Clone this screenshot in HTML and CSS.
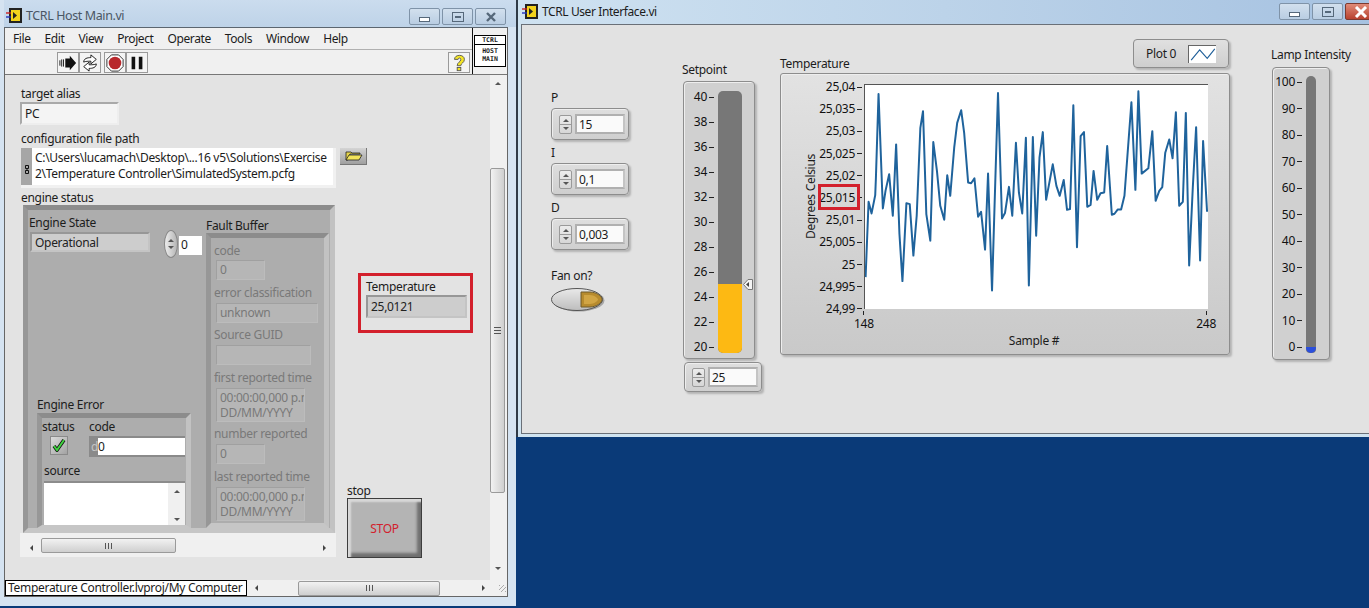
FILE: index.html
```html
<!DOCTYPE html>
<html lang="en">
<head>
  <meta charset="UTF-8" />
  <title>TCRL Host Main.vi</title>
  <link rel="stylesheet" href="styles.css">
</head>
<body>
  <div class="desktop">

    <!-- host window -->
    <div class="win win-host">
      <div class="titlebar">
        <svg class="vi-icon" viewBox="0 0 17 17"><rect x="3" y="1" width="13" height="15" fill="#222"/><rect x="5" y="3" width="9" height="11" fill="#f2d21c"/><path d="M7 5l4 3.5-4 3.5z" fill="#222"/><path d="M0 6h5" stroke="#c22" stroke-width="1.4"/><path d="M0 10h5" stroke="#23b" stroke-width="1.4"/></svg>
        <span class="title">TCRL Host Main.vi</span>
        <div class="win-btns">
          <span class="wb"><i class="g-min"></i></span>
          <span class="wb"><i class="g-max"></i></span>
          <span class="wb wb-x"><svg viewBox="0 0 12 10" width="12" height="10"><path d="M2 1l8 8M10 1l-8 8" stroke="#56687a" stroke-width="2.4"/></svg></span>
        </div>
      </div>

      <div class="vi-body">
        <div class="top-area">
          <div class="top-left">
            <div class="menubar">
              <span>File</span><span>Edit</span><span>View</span><span>Project</span><span>Operate</span><span>Tools</span><span>Window</span><span>Help</span>
            </div>
            <div class="toolbar">
              <div class="tool-group">
                <span class="tool"><svg viewBox="0 0 20 20"><path d="M1 7v6M3 6v8M5 6v8" stroke="#111"/><path d="M7 5h5V2l7 8-7 8v-3H7z" fill="#111"/></svg></span>
                <span class="tool"><svg viewBox="0 0 20 20"><path d="M3 9c0-4 4-5 8-5V1l6 5-6 5V8c-3 0-6 0-8 1z" fill="#fff" stroke="#111"/><path d="M17 11c0 4-4 5-8 5v3l-6-5 6-5v3c3 0 6 0 8-1z" fill="#fff" stroke="#111"/></svg></span>
              </div>
              <div class="tool-group">
                <span class="tool"><svg viewBox="0 0 20 20"><path d="M6 1h8l5 5v8l-5 5H6l-5-5V6z" fill="#fff" stroke="#222"/><circle cx="10" cy="10" r="7" fill="#b8282c"/></svg></span>
                <span class="tool"><svg viewBox="0 0 20 20"><path d="M4 3h4v14H4zM12 3h4v14h-4z" fill="#111"/></svg></span>
              </div>
              <span class="tool tool-help"><svg viewBox="0 0 20 20"><path d="M5 6c0-6 11-6 11 0 0 4-4 4-4 7H8c0-4 4-4 4-7 0-2-3-2-3 0z" fill="#f4e526" stroke="#555"/><rect x="8" y="15" width="4" height="3.5" fill="#f4e526" stroke="#555"/></svg></span>
            </div>
          </div>
          <div class="vi-logo-cell">
            <div class="vi-logo"><div class="vi-logo-top">TCRL</div><div class="vi-logo-main">HOST<br>MAIN</div></div>
          </div>
        </div>

        <div class="panel-row">
          <div class="host-panel">
            <div class="col-main">
              <div class="lbl">target alias</div>
              <div class="str-box alias-box">PC</div>
              <div class="lbl cfg-lbl">configuration file path</div>
              <div class="path-row">
                <div class="path-box">
                  <span class="path-tag"><svg viewBox="0 0 5 9" width="5" height="9"><path d="M.5.5h3v3h-3zM.5 5.5h3v3h-3zM2 3.5v2" fill="none" stroke="#111"/></svg></span>
                  <div class="path-text">C:\Users\lucamach\Desktop\...16 v5\Solutions\Exercise<br>2\Temperature Controller\SimulatedSystem.pcfg</div>
                </div>
                <span class="browse"><svg viewBox="0 0 18 11" width="18" height="11"><path d="M1 2h5l1 1h8v1H5L3 10H1z" fill="#e3d34a" stroke="#222" stroke-width=".8"/><path d="M4 5h13l-3 5H1z" fill="#f1e25a" stroke="#222" stroke-width=".8"/></svg></span>
              </div>
              <div class="lbl status-lbl">engine status</div>

              <div class="cluster engine">
                <div class="engine-left">
                  <div class="state-row">
                    <div class="state-stack">
                      <div class="lbl">Engine State</div>
                      <div class="str-box dark-box state-box">Operational</div>
                    </div>
                    <span class="oval-spin"><i class="tri-up"></i><i class="tri-down"></i></span>
                    <span class="index-box">0</span>
                  </div>
                  <div class="error-group">
                    <div class="lbl">Engine Error</div>
                    <div class="cluster error-cluster">
                      <div class="err-top">
                        <div class="err-status">
                          <div class="lbl">status</div>
                          <span class="bool-led"><svg viewBox="0 0 14 14" width="14" height="14"><path d="M2 8l3 4 7-10" fill="none" stroke="#111" stroke-width="3.6"/><path d="M2 8l3 4 7-10" fill="none" stroke="#3fd23f" stroke-width="2"/></svg></span>
                        </div>
                        <div class="err-code">
                          <div class="lbl">code</div>
                          <div class="code-box"><span class="code-radix">d</span><span class="code-val">0</span></div>
                        </div>
                      </div>
                      <div class="lbl src-lbl">source</div>
                      <div class="src-box">
                        <div class="src-sb"><i class="tri-up dark"></i><i class="tri-down dark"></i></div>
                      </div>
                    </div>
                  </div>
                </div>

                <div class="fault-col">
                  <div class="lbl fault-title">Fault Buffer</div>
                  <div class="cluster fault">
                    <div class="f-lbl first">code</div>
                    <div class="f-box first w-sm">0</div>
                    <div class="f-lbl">error classification</div>
                    <div class="f-box w-lg">unknown</div>
                    <div class="f-lbl">Source GUID</div>
                    <div class="f-box w-md"></div>
                    <div class="f-lbl">first reported time</div>
                    <div class="f-box w-time">00:00:00,000 p.m.<br>DD/MM/YYYY</div>
                    <div class="f-lbl">number reported</div>
                    <div class="f-box w-sm">0</div>
                    <div class="f-lbl">last reported time</div>
                    <div class="f-box w-time">00:00:00,000 p.m.<br>DD/MM/YYYY</div>
                  </div>
                </div>
              </div>

              <div class="hstrip">
                <i class="tri-left"></i>
                <span class="thumb-h strip-thumb"><b class="grip"></b></span>
                <i class="tri-right strip-right"></i>
              </div>
            </div>

            <div class="col-side">
              <div class="red-box temp-ind">
                <div class="lbl">Temperature</div>
                <div class="str-box dark-box temp-val">25,0121</div>
              </div>
              <div class="lbl stop-lbl">stop</div>
              <div class="stop-btn">STOP</div>
            </div>
          </div>

          <div class="vscroll">
            <i class="tri-up dark"></i>
            <span class="thumb-v"><b class="grip-v"></b></span>
            <i class="tri-down dark"></i>
          </div>
        </div>

        <div class="status-row">
          <div class="ctx-box">Temperature Controller.lvproj/My Computer</div>
          <div class="ctx-scroll">
            <i class="tri-left"></i>
            <span class="thumb-h ctx-thumb"><b class="grip"></b></span>
            <i class="tri-right ctx-right"></i>
            <span class="resize-dots"></span>
          </div>
        </div>
      </div>
    </div>

    <!-- user interface window -->
    <div class="win win-ui">
      <div class="titlebar ui-title">
        <svg class="vi-icon" viewBox="0 0 17 17"><rect x="3" y="1" width="13" height="15" fill="#222"/><rect x="5" y="3" width="9" height="11" fill="#f2d21c"/><path d="M7 5l4 3.5-4 3.5z" fill="#222"/><path d="M0 6h5" stroke="#c22" stroke-width="1.4"/><path d="M0 10h5" stroke="#23b" stroke-width="1.4"/></svg>
        <span class="title dark-title">TCRL User Interface.vi</span>
        <div class="win-btns ui-btns">
          <span class="wb"><i class="g-min"></i></span>
          <span class="wb"><i class="g-max"></i></span>
          <span class="wb wb-close"><svg viewBox="0 0 14 12" width="14" height="12"><path d="M2 1l10 10M12 1L2 11" stroke="#fff" stroke-width="3"/></svg></span>
        </div>
      </div>

      <div class="ui-panel">
        <div class="pid-col">
          <div class="lbl">P</div>
          <div class="num-ctl"><span class="spin"><i class="tri-up dark"></i><i class="tri-down dark"></i></span><span class="num-val">15</span></div>
          <div class="lbl pid-lbl">I</div>
          <div class="num-ctl"><span class="spin"><i class="tri-up dark"></i><i class="tri-down dark"></i></span><span class="num-val">0,1</span></div>
          <div class="lbl pid-lbl">D</div>
          <div class="num-ctl"><span class="spin"><i class="tri-up dark"></i><i class="tri-down dark"></i></span><span class="num-val">0,003</span></div>
          <div class="lbl fan-lbl">Fan on?</div>
          <svg class="fan" viewBox="0 0 54 24" width="54" height="24">
            <defs><linearGradient id="fanfill" x1="0" y1="0" x2="0" y2="1"><stop offset="0" stop-color="#e9e9e9"/><stop offset="1" stop-color="#bdbdbd"/></linearGradient></defs>
            <ellipse cx="27.5" cy="12.5" rx="26" ry="11" fill="#a8a8a8"/>
            <ellipse cx="26" cy="11.5" rx="25.5" ry="11" fill="url(#fanfill)" stroke="#555"/>
            <path d="M30 4h9c6 0 12 4 12 7.500s-6 7.500-12 7.500H30z" fill="#b78b2e" stroke="#6e5a2a"/>
            <path d="M33 7h6c4 0 8 3 8 4.500s-4 4.500-8 4.500h-6z" fill="#d1a544"/>
          </svg>
        </div>

        <div class="setpoint-col">
          <div class="lbl">Setpoint</div>
          <div class="slider-box setpoint-box">
            <div class="scale setpoint-scale">
              <span>40</span><span>38</span><span>36</span><span>34</span><span>32</span><span>30</span><span>28</span><span>26</span><span>24</span><span>22</span><span>20</span>
            </div>
            <div class="track setpoint-track">
              <div class="setpoint-fill"></div>
              <svg class="pointer" viewBox="0 0 10 11" width="10" height="11"><path d="M.5 5.500L5 .5h4.500v10H5z" fill="#f4f4f4" stroke="#777"/><path d="M3 5.500l3-2.500v5z" fill="#444"/></svg>
            </div>
          </div>
          <div class="num-ctl set-ctl"><span class="spin"><i class="tri-up dark"></i><i class="tri-down dark"></i></span><span class="num-val">25</span></div>
        </div>

        <div class="chart-col">
          <div class="chart-head">
            <div class="lbl chart-lbl">Temperature</div>
            <div class="legend">
              <span>Plot 0</span>
              <svg class="swatch" viewBox="0 0 28 18" width="28" height="18"><path d="M2 15L11 4l8 9 8-10" fill="none" stroke="#1f5f99" stroke-width="1.2"/></svg>
            </div>
          </div>
          <div class="chart">
            <div class="plot-row">
              <div class="y-title"><span>Degrees Celsius</span></div>
              <div class="scale y-scale">
                <span>25,04</span><span>25,035</span><span>25,03</span><span>25,025</span><span>25,02</span><span>25,015</span><span>25,01</span><span>25,005</span><span>25</span><span>24,995</span><span>24,99</span>
              </div>
              <svg class="plot" viewBox="12 6 1032 675" width="344" height="225">
                <polyline fill="none" stroke="#1f639c" stroke-width="6" stroke-linejoin="round" points="13,585 22,358 31,393 42,338 44,288 52,33 65,378 73,325 84,275 95,400 105,185 115,455 124,597 136,362 146,365 157,520 167,400 178,135 186,85 196,395 208,475 217,178 228,265 238,370 250,412 259,278 268,340 280,195 289,120 301,82 310,150 322,300 331,302 341,287 352,403 361,388 373,502 382,273 394,625 404,290 412,30 424,408 433,392 445,313 455,400 466,180 475,330 485,393 496,165 505,610 517,163 527,460 537,225 547,148 557,352 577,245 588,310 598,340 610,292 620,382 629,380 639,67 650,495 661,160 671,148 681,373 691,367 700,265 711,352 721,332 732,330 741,190 755,397 763,394 773,381 783,381 793,340 814,58 826,322 835,25 845,273 865,257 877,145 887,355 898,325 907,314 916,210 928,170 938,227 948,88 958,370 969,358 978,90 988,550 999,315 1009,133 1021,535 1030,175 1042,388"/>
              </svg>
            </div>
            <div class="x-axis"><span>148</span><span>248</span></div>
            <div class="lbl x-title">Sample #</div>
            <div class="red-box y-mark"></div>
          </div>
        </div>

        <div class="lamp-col">
          <div class="lbl">Lamp Intensity</div>
          <div class="slider-box lamp-box">
            <div class="scale lamp-scale">
              <span>100</span><span>90</span><span>80</span><span>70</span><span>60</span><span>50</span><span>40</span><span>30</span><span>20</span><span>10</span><span>0</span>
            </div>
            <div class="track lamp-track"><div class="lamp-fill"></div></div>
          </div>
        </div>
      </div>
    </div>

  </div>
</body>
</html>
```

FILE: styles.css
```css
* {
  box-sizing: border-box;
}

html, body {
  margin: 0;
  height: 608px;
  overflow: hidden;
}

body {
  font-family: "Noto Sans", sans-serif;
  font-size: 12px;
  letter-spacing: -0.3px;
  color: #1c1c1c;
  background-color: #0a3a78;
}

i, b {
  display: block;
}

.desktop {
  display: flex;
  align-items: flex-start;
  width: 1369px;
  height: 608px;
}

/* window frames */
.win-host {
  width: 516px;
  height: 606px;
  background-color: #d5e3f1;
  padding: 0 8px 9px 4px;
  display: flex;
  flex-direction: column;
}

.win-ui {
  width: 853px;
  height: 437px;
  border-left: 2px solid #2f3a46;
  background-color: #cfe3f0;
  padding: 0 0 3px 3px;
  display: flex;
  flex-direction: column;
}

.titlebar {
  height: 27px;
  flex: none;
  display: flex;
  align-items: flex-start;
  padding: 7px 0 0 2px;
  margin: 0 -8px 0 0;
  background: linear-gradient(#cbdcee, #bed3e8);
}

.ui-title {
  height: 24px;
  padding: 3px 0 0 1px;
  margin: 0;
  background: linear-gradient(90deg, #cfe2f1, #bcd3e9 50%, #a6c2e1);
}

.vi-icon {
  width: 17px;
  height: 17px;
  flex: none;
}

.title {
  margin-left: 3px;
  line-height: 17px;
  font-size: 12.500px;
  letter-spacing: -0.4px;
  color: #4a5664;
}

.dark-title {
  font-size: 12px;
  color: #1c1c1c;
}

.win-btns {
  margin-left: auto;
  display: flex;
  gap: 2px;
  padding-right: 10px;
  margin-top: 1px;
}

.ui-btns {
  padding-right: 0;
  margin-top: 0;
  margin-right: -7px;
}

.wb {
  width: 31px;
  height: 17px;
  border: 1px solid #7f93a8;
  border-radius: 2px;
  background: linear-gradient(#d2e0ee, #b9cde2);
  display: flex;
  align-items: center;
  justify-content: center;
}

.wb-close {
  background: linear-gradient(#e08b78, #b8422f);
  border-color: #7c3a30;
}

.g-min {
  width: 11px;
  height: 5px;
  margin-top: 5px;
  border: 1px solid #56687a;
  background: #fff;
}

.g-max {
  width: 12px;
  height: 10px;
  border: 1px solid #56687a;
  background: linear-gradient(#56687a, #56687a) center / 6px 2px no-repeat;
}

/* host vi */
.vi-body {
  flex: 1;
  border: 1px solid #666;
  border-top-color: #5c6670;
  display: flex;
  flex-direction: column;
  background-color: #e3e3e3;
}

.top-area {
  display: flex;
  height: 47px;
  background-color: #f0f0f0;
  border-bottom: 1px solid #777;
}

.top-left {
  flex: 1;
}

.menubar {
  height: 22px;
  border-bottom: 1px solid #b0b0b0;
  display: flex;
  align-items: center;
  gap: 14px;
  padding-left: 8px;
  letter-spacing: -0.4px;
}

.toolbar {
  height: 24px;
  display: flex;
  padding: 2px 0 0 52px;
  gap: 3px;
}

.tool-group {
  display: flex;
}

.tool {
  width: 22px;
  height: 21px;
  border: 1px solid #9a9a9a;
  background-color: #f4f4f4;
  padding: 1px;
  display: block;
}

.tool svg {
  display: block;
  width: 18px;
  height: 18px;
}

.tool-help {
  margin-left: auto;
  margin-right: 2px;
}

.vi-logo-cell {
  width: 35px;
  border-left: 1px solid #111;
  padding: 7px 0 0 1px;
}

.vi-logo {
  width: 32px;
  height: 32px;
  border: 1px solid #000;
  background-color: #fff;
  font-family: "DejaVu Sans Mono", monospace;
  font-weight: bold;
  font-size: 6.500px;
  letter-spacing: 0;
  line-height: 8px;
  text-align: center;
}

.vi-logo-top {
  height: 9px;
  border-bottom: 1px solid #000;
}

.vi-logo-main {
  padding-top: 2px;
}

.panel-row {
  flex: 1;
  display: flex;
  min-height: 0;
}

.host-panel {
  flex: 1;
  display: flex;
  overflow: hidden;
  padding: 10px 0 0 16px;
}

.col-main {
  width: 326px;
  flex: none;
}

.lbl {
  line-height: 16px;
  padding-top: 1px;
  margin-bottom: -1px;
  white-space: nowrap;
}

.str-box {
  height: 23px;
  padding-left: 3px;
  line-height: 20px;
  border: 2px solid;
  border-color: #a9a9a9 #eeeeee #eeeeee #a9a9a9;
  background-color: #f4f4f4;
}

.alias-box {
  width: 99px;
  margin-top: 1px;
  margin-left: -1px;
}

.cfg-lbl {
  margin-top: 5px;
}

.path-row {
  display: flex;
  margin-top: 2px;
  gap: 4px;
  align-items: flex-start;
}

.path-box {
  width: 315px;
  height: 40px;
  flex: none;
  display: flex;
  background-color: #f1f1f1;
  padding: 0 3px 3px 0;
}

.path-tag {
  width: 11px;
  flex: none;
  background-color: #a6a6a6;
  padding: 13px 0 0 4px;
}

.path-text {
  flex: 1;
  background-color: #fff;
  padding: 2px 0 0 3px;
  line-height: 16px;
  white-space: nowrap;
}

.browse {
  width: 27px;
  height: 17px;
  flex: none;
  background: linear-gradient(#d4d4d4, #9f9f9f);
  border-right: 1px solid #777;
  border-bottom: 1px solid #777;
  padding: 2px 0 0 5px;
}

.browse svg {
  display: block;
}

.status-lbl {
  margin-top: 1px;
}

.cluster {
  border: 5px solid;
  border-color: #8c8c8c #c2c2c2 #c6c6c6 #979797;
  background-color: #adadad;
}

.engine {
  width: 312px;
  height: 328px;
  margin-left: 2px;
  display: flex;
}

.engine-left {
  width: 178px;
  height: 318px;
  display: flex;
  flex-direction: column;
  justify-content: space-between;
  padding-left: 1px;
}

.state-row {
  display: flex;
  margin-top: 4px;
}

.state-stack {
  width: 121px;
}

.dark-box {
  border-color: #979797 #c4c4c4 #c4c4c4 #979797;
  background-color: #cdcdcd;
  color: #222;
}

.state-box {
  height: 20px;
  line-height: 18px;
  margin: 2px 0 0 1px;
  width: 120px;
}

.oval-spin {
  width: 14px;
  height: 28px;
  margin: 16px 0 0 14px;
  border-radius: 50%;
  background: linear-gradient(90deg, #ececec, #b5b5b5);
  border: 1px solid #888;
  display: flex;
  flex-direction: column;
  align-items: center;
  justify-content: center;
  gap: 4px;
}

.index-box {
  width: 23px;
  height: 19px;
  margin: 22px 0 0 1px;
  background-color: #fff;
  padding-left: 2px;
  line-height: 18px;
}

.error-group {
  margin-left: 8px;
}

.error-cluster {
  width: 154px;
  height: 115px;
  margin-top: 1px;
  border-bottom-width: 3px;
}

.err-top {
  display: flex;
  height: 44px;
}

.err-status {
  width: 47px;
}

.bool-led {
  display: block;
  width: 18px;
  height: 19px;
  margin: 2px 0 0 8px;
  background: linear-gradient(135deg, #dcdcdc, #a2a2a2);
  border: 1px solid #8a8a8a;
  padding: 1px 0 0 1px;
}

.bool-led svg {
  display: block;
}

.code-box {
  width: 96px;
  height: 21px;
  margin-top: 2px;
  display: flex;
  background-color: #8a8a8a;
  padding: 2px 0;
  line-height: 17px;
}

.code-radix {
  width: 9px;
  text-align: right;
  color: #c5c5c5;
}

.code-val {
  flex: 1;
  background-color: #fff;
}

.src-lbl {
  margin-left: 2px;
}

.src-box {
  width: 141px;
  height: 44px;
  margin: 3px 0 0 2px;
  background-color: #fff;
  border-top: 2px solid #8c8c8c;
  display: flex;
  justify-content: flex-end;
}

.src-sb {
  width: 17px;
  background-color: #f0f0f0;
  display: flex;
  flex-direction: column;
  align-items: center;
  justify-content: space-between;
  padding: 7px 0 4px;
}

.fault-col {
  width: 123px;
}

.fault-title {
  margin-top: 7px;
}

.fault {
  height: 295px;
  margin-top: 0;
  padding-left: 3px;
  color: #797979;
}

.f-lbl {
  line-height: 16px;
  padding-top: 1px;
  margin-bottom: -1px;
  margin-top: 3.500px;
  white-space: nowrap;
}

.f-lbl.first {
  margin-top: 4px;
}

.f-box {
  height: 20px;
  margin: 3px 0 0 2px;
  background-color: #b6b6b6;
  border: 1px solid;
  border-color: #a0a0a0 #bcbcbc #bcbcbc #a0a0a0;
  padding-left: 3px;
  line-height: 17px;
  overflow: hidden;
  white-space: nowrap;
}

.f-box.first {
  margin-top: 2px;
}

.w-sm {
  width: 49px;
}

.w-lg {
  width: 102px;
}

.w-md {
  width: 95px;
}

.w-time {
  width: 89px;
  height: 34px;
  line-height: 15px;
  padding-top: 1px;
}

.hstrip {
  width: 316px;
  height: 24px;
  margin-left: -1px;
  padding-top: 12px;
  background-color: #f0f0f0;
  display: flex;
  align-items: flex-start;
}

.hstrip .tri-left {
  margin: 0 0 0 10px;
}

.thumb-h {
  height: 15px;
  border: 1px solid #9a9a9a;
  border-radius: 2px;
  background: linear-gradient(#f2f2f2, #cfcfcf);
  display: flex;
  align-items: center;
  justify-content: center;
}

.strip-thumb {
  width: 135px;
  margin: -7px 0 0 8px;
}

.strip-right {
  margin-left: 147px;
}

.grip {
  width: 7px;
  height: 6px;
  background: repeating-linear-gradient(90deg, #555 0 1px, transparent 1px 3px);
}

.grip-v {
  width: 7px;
  height: 7px;
  background: repeating-linear-gradient(#555 0 1px, transparent 1px 3px);
}

.col-side {
  width: 130px;
  flex: none;
}

.red-box {
  border: 3px solid #d3202c;
}

.temp-ind {
  width: 115px;
  height: 60px;
  margin: 188px 0 0 11px;
  padding: 2px 0 0 5px;
}

.temp-val {
  width: 101px;
  margin-top: 1px;
}

.stop-lbl {
  margin-top: 149px;
}

.stop-btn {
  width: 75px;
  height: 60px;
  border: 1px solid #3d3d3d;
  background-color: #b4b4b4;
  box-shadow: inset 3px 3px 2px #d9d9d9, inset -4px -4px 3px #6f6f6f;
  color: #d3202c;
  text-align: center;
  line-height: 60px;
}

/* scrollbars */
.vscroll {
  width: 17px;
  flex: none;
  background-color: #f0f0f0;
  display: flex;
  flex-direction: column;
  align-items: center;
  padding: 7px 2px 7px 0;
}

.thumb-v {
  width: 15px;
  height: 325px;
  margin-top: 83px;
  margin-bottom: 74px;
  border: 1px solid #9a9a9a;
  border-radius: 2px;
  background: linear-gradient(90deg, #f2f2f2, #cfcfcf);
  display: flex;
  align-items: center;
  justify-content: center;
}

.tri-up, .tri-down, .tri-left, .tri-right {
  width: 0;
  height: 0;
  flex: none;
  border: 3px solid transparent;
}

.tri-up {
  border-top-width: 0;
  border-bottom: 3px solid #555;
}

.tri-down {
  border-bottom-width: 0;
  border-top: 3px solid #555;
}

.tri-left {
  border-left-width: 0;
  border-right: 3px solid #444;
}

.tri-right {
  border-right-width: 0;
  border-left: 3px solid #444;
}

.status-row {
  height: 16px;
  flex: none;
  display: flex;
}

.ctx-box {
  width: 242px;
  border: 1px solid #000;
  background-color: #fff;
  line-height: 14px;
  padding-left: 2px;
  white-space: nowrap;
  overflow: hidden;
}

.ctx-scroll {
  flex: 1;
  background-color: #f0f0f0;
  display: flex;
  align-items: center;
  padding-left: 8px;
}

.ctx-thumb {
  width: 142px;
  margin-left: 40px;
}

.ctx-right {
  margin-left: 42px;
}

.resize-dots {
  width: 7px;
  height: 7px;
  margin-left: 14px;
  background: repeating-linear-gradient(135deg, #aaa 0 1px, transparent 1px 3px);
}

/* user interface vi */
.ui-panel {
  flex: 1;
  border: 1px solid #6a7078;
  border-width: 1px 0 1px 1px;
  background-color: #e2e2e2;
  display: flex;
  padding-left: 29px;
}

.pid-col {
  width: 131px;
  padding-top: 64px;
}

.num-ctl {
  width: 78px;
  height: 32px;
  margin-top: 3px;
  border: 1px solid #8d8d8d;
  border-radius: 4px;
  background: linear-gradient(#dedede, #cfcfcf);
  box-shadow: 2px 2px 2px #b4b4b4, inset 1px 1px 0 #eee;
  display: flex;
  align-items: center;
  padding-left: 7px;
  gap: 3px;
}

.spin {
  width: 13px;
  height: 19px;
  border: 1px solid #9a9a9a;
  border-radius: 2px;
  background: linear-gradient(#9a9a9a, #9a9a9a) center / 100% 1px no-repeat, linear-gradient(#ececec, #d6d6d6);
  display: flex;
  flex-direction: column;
  align-items: center;
  justify-content: space-between;
  padding: 3px 0;
}

.num-val {
  width: 50px;
  height: 20px;
  border: 2px solid #b0b0b0;
  border-right-color: #c4c4c4;
  background-color: #fafafa;
  padding-left: 2px;
  line-height: 17px;
}

.pid-lbl {
  margin-top: 4px;
}

.fan-lbl {
  margin-top: 17px;
}

.fan {
  display: block;
  margin-top: 5px;
}

.setpoint-col {
  width: 98px;
  padding-top: 36px;
}

.slider-box {
  border: 1px solid #8d8d8d;
  border-radius: 4px;
  background-color: #d0d0d0;
  box-shadow: 2px 2px 2px #b4b4b4, inset 1px 1px 0 #eee;
  display: flex;
  align-items: flex-start;
}

.setpoint-box {
  width: 72px;
  height: 278px;
  margin: 4px 0 0 1px;
  padding-top: 7px;
}

.scale {
  display: flex;
  flex-direction: column;
  justify-content: space-between;
  align-items: flex-end;
  flex: none;
}

.scale span {
  display: flex;
  align-items: center;
  gap: 2px;
  line-height: 16px;
  color: #111;
}

.scale span::after {
  content: "";
  width: 5px;
  height: 1px;
  background-color: #222;
}

.setpoint-scale {
  width: 30px;
  height: 266px;
  margin-right: 4px;
}

.track {
  position: relative;
  background-color: #777;
  display: flex;
  flex-direction: column;
  justify-content: flex-end;
}

.setpoint-track {
  width: 24px;
  height: 262px;
  margin-top: 2px;
  border-radius: 5px;
}

.setpoint-fill {
  height: 69px;
  background-color: #fdb913;
  border-radius: 0 0 5px 5px;
}

.pointer {
  position: absolute;
  left: 25px;
  top: 188px;
}

.set-ctl {
  margin: 3px 0 0 2px;
  height: 30px;
}

.chart-col {
  width: 491px;
  padding-top: 14px;
}

.chart-head {
  width: 450px;
  height: 34px;
  display: flex;
  justify-content: space-between;
  align-items: flex-end;
}

.chart-lbl {
  margin-bottom: 1px;
}

.legend {
  width: 96px;
  height: 29px;
  margin: 0 1px 5px 0;
  border: 1px solid #8d8d8d;
  border-radius: 4px;
  background: linear-gradient(#e0e0e0, #cecece);
  box-shadow: 2px 2px 2px #b4b4b4;
  display: flex;
  align-items: center;
  justify-content: space-between;
  padding: 0 12px;
}

.swatch {
  display: block;
  background-color: #fff;
  border-left: 1px solid #666;
  border-top: 1px solid #666;
}

.chart {
  position: relative;
  width: 450px;
  height: 282px;
  border: 1px solid #8d8d8d;
  border-radius: 3px;
  background: linear-gradient(#e2e2e2, #c9c9c9);
  box-shadow: 2px 2px 2px #b4b4b4, inset 1px 1px 0 #eee;
  padding: 10px 0 0 22px;
}

.plot-row {
  display: flex;
  height: 225px;
}

.y-title {
  width: 16px;
  height: 225px;
  display: flex;
  align-items: center;
  justify-content: center;
}

.y-title span {
  writing-mode: vertical-rl;
  transform: rotate(180deg);
  white-space: nowrap;
  line-height: 16px;
}

.y-scale {
  width: 43px;
  height: 238px;
  margin: -5px 2px 0 0;
}

.plot {
  display: block;
  flex: none;
  background-color: #fff;
  border-top: 1px solid #555;
  border-left: 1px solid #555;
}

.x-axis {
  width: 362px;
  margin: 2px 0 0 51px;
  display: flex;
  justify-content: space-between;
  line-height: 16px;
  color: #111;
}

.x-axis span {
  display: flex;
  flex-direction: column;
  align-items: center;
}

.x-axis span::before {
  content: "";
  width: 1px;
  height: 4px;
  background-color: #222;
  margin-bottom: 1px;
}

.x-title {
  width: 340px;
  margin-left: 61px;
  text-align: center;
}

.y-mark {
  position: absolute;
  left: 37px;
  top: 110px;
  width: 42px;
  height: 26px;
}

.lamp-col {
  padding-top: 21px;
}

.lamp-box {
  width: 58px;
  height: 293px;
  margin: 5px 0 0 1px;
  padding-top: 6px;
}

.lamp-scale {
  width: 29px;
  height: 281px;
  margin-right: 4px;
}

.lamp-track {
  width: 10px;
  height: 277px;
  margin-top: 2px;
  border-radius: 5px 5px 4px 4px;
}

.lamp-fill {
  height: 6px;
  background-color: #2b4fdc;
  border-radius: 0 0 5px 5px;
}
```
